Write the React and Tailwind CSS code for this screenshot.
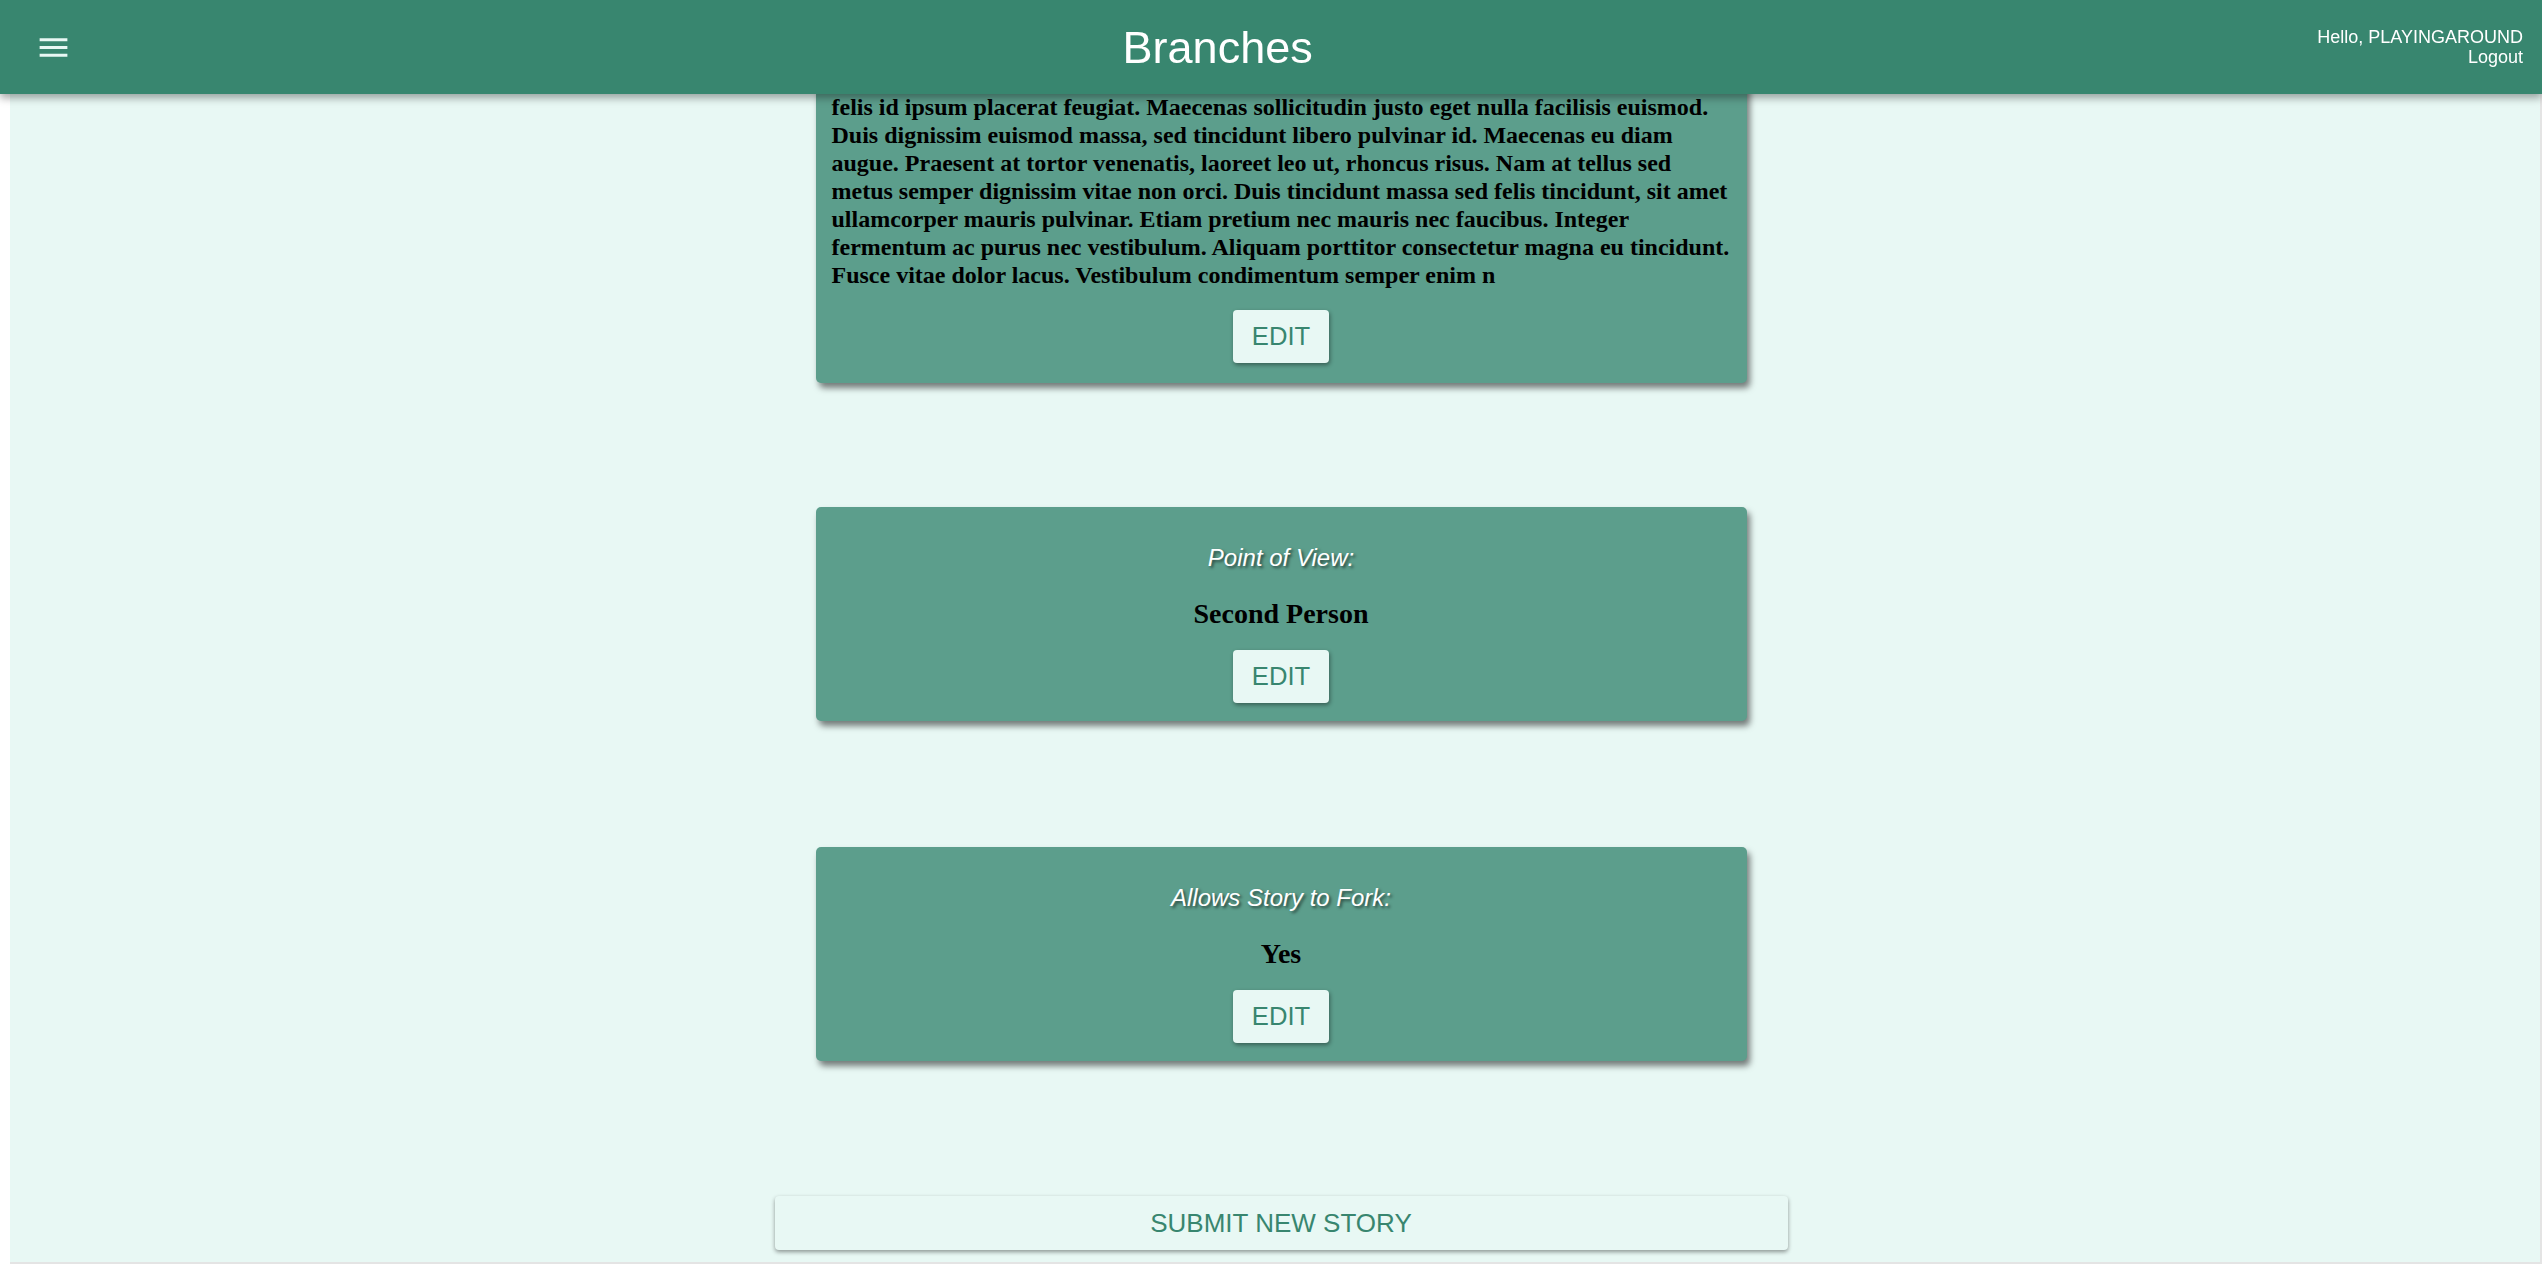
import React from "react";

function EditButton() {
  return (
    <button className="mt-[20px] w-[96px] h-[53px] rounded-[4px] bg-[#e8f8f4] text-[#38866f] text-[25.6px] leading-none shadow-[1px_2px_4px_rgba(0,0,0,0.4)] font-['Liberation_Sans',Arial,sans-serif]">
      EDIT
    </button>
  );
}

function InfoCard({ label, value, className = "" }) {
  return (
    <div className={`w-[931px] rounded-[5px] bg-[#5c9e8c] shadow-[3px_5px_6px_rgba(0,0,0,0.5)] flex flex-col items-center pt-[37px] pb-[18px] ${className}`}>
      <p className="text-[24px] leading-[28px] italic text-white [text-shadow:2px_2px_3px_rgba(0,0,0,0.55)] font-['Liberation_Sans',Arial,sans-serif]">
        {label}
      </p>
      <p className="mt-[26px] text-[28px] leading-[32px] font-bold text-black font-['Liberation_Serif','Times_New_Roman',serif]">
        {value}
      </p>
      <EditButton />
    </div>
  );
}

export default function App() {
  return (
    <div className="h-screen w-full bg-white flex overflow-hidden">
      <div className="ml-[10px] flex-1 flex flex-col">
        <div className="flex-1 flex">
          <main className="flex-1 bg-[#e8f8f4] flex flex-col items-center pl-[12px] pt-[77px]">
            <div className="w-[931px] rounded-[5px] bg-[#5c9e8c] shadow-[3px_5px_6px_rgba(0,0,0,0.5)] flex flex-col items-center px-[16px] pt-[16px] pb-[20px]">
              <p className="w-full text-[24px] leading-[28px] font-bold text-black font-['Liberation_Serif','Times_New_Roman',serif]">
                felis id ipsum placerat feugiat. Maecenas sollicitudin justo eget nulla facilisis euismod. Duis dignissim euismod massa, sed tincidunt libero pulvinar id. Maecenas eu diam augue. Praesent at tortor venenatis, laoreet leo ut, rhoncus risus. Nam at tellus sed metus semper dignissim vitae non orci. Duis tincidunt massa sed felis tincidunt, sit amet ullamcorper mauris pulvinar. Etiam pretium nec mauris nec faucibus. Integer fermentum ac purus nec vestibulum. Aliquam porttitor consectetur magna eu tincidunt. Fusce vitae dolor lacus. Vestibulum condimentum semper enim n
              </p>
              <div className="mt-[1px]">
                <EditButton />
              </div>
            </div>

            <InfoCard className="mt-[124px]" label="Point of View:" value="Second Person" />
            <InfoCard className="mt-[126px]" label="Allows Story to Fork:" value="Yes" />

            <button className="mt-[135px] w-[1013px] h-[54px] rounded-[4px] bg-[#e8f8f4] text-[#38866f] text-[26px] leading-none shadow-[0_2px_4px_rgba(0,0,0,0.4)] font-['Liberation_Sans',Arial,sans-serif]">
              SUBMIT NEW STORY
            </button>
          </main>
          <div className="w-[2px] bg-[#e4e4e4]" />
        </div>
        <div className="h-[2px] bg-[#e4e4e4]" />
      </div>

      <header className="fixed top-0 left-0 right-0 h-[94px] bg-[#38866f] shadow-[0_4px_8px_rgba(0,0,0,0.35)] flex items-center justify-between font-['Liberation_Sans',Arial,sans-serif]">
        <div className="w-[118px] h-full flex items-center pl-[35px]">
          <svg width="37" height="37" viewBox="0 0 24 24" fill="#e8f8f4">
            <path d="M3 18h18v-2H3v2zm0-5h18v-2H3v2zm0-7v2h18V6H3z" />
          </svg>
        </div>
        <h1 className="text-[45px] leading-none text-white">Branches</h1>
        <div className="pr-[19px] text-right text-[18px] leading-[20px] text-white">
          <div>Hello, PLAYINGAROUND</div>
          <div>Logout</div>
        </div>
      </header>
    </div>
  );
}
